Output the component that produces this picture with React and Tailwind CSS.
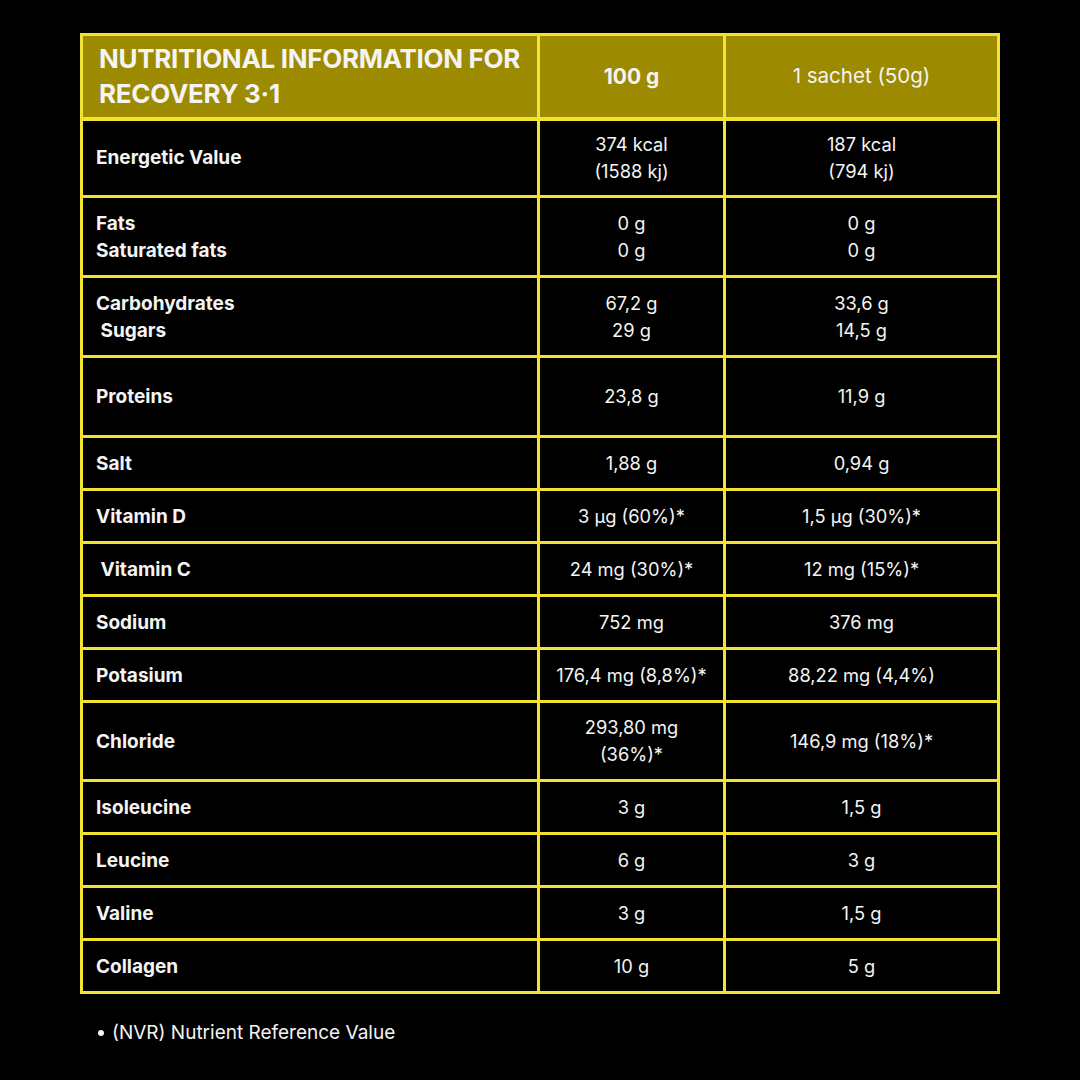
import React from "react";

const rows = [
  { label: ["Energetic Value"], a: ["374 kcal", "(1588 kj)"], b: ["187 kcal", "(794 kj)"], h: "h-[78px]" },
  { label: ["Fats", "Saturated fats"], a: ["0 g", "0 g"], b: ["0 g", "0 g"], h: "h-[80px]" },
  { label: ["Carbohydrates", "\u00a0Sugars"], a: ["67,2 g", "29 g"], b: ["33,6 g", "14,5 g"], h: "h-[80px]" },
  { label: ["Proteins"], a: ["23,8 g"], b: ["11,9 g"], h: "h-[80px]" },
  { label: ["Salt"], a: ["1,88 g"], b: ["0,94 g"], h: "h-[53px]" },
  { label: ["Vitamin D"], a: ["3 µg (60%)*"], b: ["1,5 µg (30%)*"], h: "h-[53px]" },
  { label: ["\u00a0Vitamin C"], a: ["24 mg (30%)*"], b: ["12 mg (15%)*"], h: "h-[53px]" },
  { label: ["Sodium"], a: ["752 mg"], b: ["376 mg"], h: "h-[53px]" },
  { label: ["Potasium"], a: ["176,4 mg (8,8%)*"], b: ["88,22 mg (4,4%)"], h: "h-[53px]" },
  { label: ["Chloride"], a: ["293,80 mg", "(36%)*"], b: ["146,9 mg (18%)*"], h: "h-[79px]" },
  { label: ["Isoleucine"], a: ["3 g"], b: ["1,5 g"], h: "h-[53px]" },
  { label: ["Leucine"], a: ["6 g"], b: ["3 g"], h: "h-[53px]" },
  { label: ["Valine"], a: ["3 g"], b: ["1,5 g"], h: "h-[53px]" },
  { label: ["Collagen"], a: ["10 g"], b: ["5 g"], h: "h-[53px]" },
];

export default function App() {
  return (
    <div
      className="w-[1080px] h-[1080px] bg-black text-[#f4f4f4] pt-[33px] pl-[80px]"
      style={{ fontFamily: "Inter, 'Liberation Sans', sans-serif" }}
    >
      <table className="border-collapse w-[917px] table-fixed">
        <colgroup>
          <col className="w-[457px]" />
          <col className="w-[186px]" />
          <col className="w-[274px]" />
        </colgroup>
        <thead>
          <tr className="h-[84px] bg-[#9c8a00]">
            <th className="border-[3px] border-[#f2e232] border-b-[4px] text-left align-middle pl-[16px] pr-2 text-[26px] leading-[35px] font-bold tracking-[-0.3px]">
              NUTRITIONAL INFORMATION FOR
              <br />
              RECOVERY 3·1
            </th>
            <th className="border-[3px] border-[#f2e232] border-b-[4px] text-center text-[21px] font-bold">100 g</th>
            <th className="border-[3px] border-[#f2e232] border-b-[4px] text-center text-[20.5px] font-normal">1 sachet (50g)</th>
          </tr>
        </thead>
        <tbody>
          {rows.map((r, i) => (
            <tr key={i} className={r.h}>
              <td className="border-[3px] border-[#f2e232] pl-[13px] text-[19px] leading-[27px] font-bold whitespace-pre">
                {r.label.map((t, j) => (
                  <div key={j}>{t}</div>
                ))}
              </td>
              <td className="border-[3px] border-[#f2e232] text-center text-[18.3px] leading-[27px]">
                {r.a.map((t, j) => (
                  <div key={j}>{t}</div>
                ))}
              </td>
              <td className="border-[3px] border-[#f2e232] text-center text-[18.3px] leading-[27px]">
                {r.b.map((t, j) => (
                  <div key={j}>{t}</div>
                ))}
              </td>
            </tr>
          ))}
        </tbody>
      </table>
      <ul className="mt-[25px] pl-[18px] text-[19px] leading-[27px]">
        <li className="flex items-center gap-[8px]">
          <span className="inline-block w-[6px] h-[6px] rounded-full bg-[#f4f4f4]" />
          <span>(NVR) Nutrient Reference Value</span>
        </li>
      </ul>
    </div>
  );
}
